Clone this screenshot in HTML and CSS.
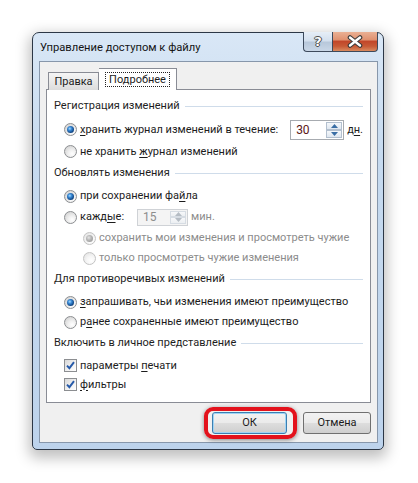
FILE: index.html
```html
<!DOCTYPE html>
<html lang="ru">
<head>
<meta charset="utf-8">
<title>Управление доступом к файлу</title>
<link rel="stylesheet" href="styles.css">
</head>
<body>
<div class="window">
  <div class="titlebar">
    <div class="title">Управление доступом к файлу</div>
    <div class="caption-btns">
      <div class="cbtn help">?</div>
      <div class="cbtn close">
        <svg width="18" height="13" viewBox="0 0 18 13">
          <path d="M4 2.5 L14 10.5 M14 2.5 L4 10.5" stroke="#3b3b3b" stroke-width="4.6" stroke-linecap="round" fill="none"/>
          <path d="M4 2.5 L14 10.5 M14 2.5 L4 10.5" stroke="#ffffff" stroke-width="2.4" stroke-linecap="round" fill="none"/>
        </svg>
      </div>
    </div>
  </div>
  <div class="client">
    <div class="tabs">
      <div class="tab">Правка</div>
      <div class="tab active"><span class="focus">Подробнее</span></div>
    </div>
    <div class="panel">
      <div class="group">
        <div class="hdr">Регистрация изменений</div>
        <div class="row h21">
          <span class="radio on"></span>
          <span class="lbl"><u>х</u>ранить журнал изменений в течение:</span>
          <div class="spin">
            <span class="val">30</span>
            <span class="arrows">
              <span class="arr up"><svg width="7" height="4" viewBox="0 0 7 4"><path d="M0 4 L3.5 0 L7 4 Z" fill="#3a6ea5"/></svg></span>
              <span class="arr dn"><svg width="7" height="4" viewBox="0 0 7 4"><path d="M0 0 L3.5 4 L7 0 Z" fill="#3a6ea5"/></svg></span>
            </span>
          </div>
          <span class="unit">д<u>н</u>.</span>
        </div>
        <div class="row h21 gap1">
          <span class="radio"></span>
          <span class="lbl">не хранить <u>ж</u>урнал изменений</span>
        </div>
      </div>
      <div class="group">
        <div class="hdr">Обновлять изменения</div>
        <div class="row h20">
          <span class="radio on"></span>
          <span class="lbl">при сохранении фа<u>й</u>ла</span>
        </div>
        <div class="row h22">
          <span class="radio"></span>
          <span class="lbl">кажд<u>ы</u>е:</span>
          <div class="spin disabled">
            <span class="val">15</span>
            <span class="arrows">
              <span class="arr up"><svg width="7" height="4" viewBox="0 0 7 4"><path d="M0 4 L3.5 0 L7 4 Z" fill="#b5bcc4"/></svg></span>
              <span class="arr dn"><svg width="7" height="4" viewBox="0 0 7 4"><path d="M0 0 L3.5 4 L7 0 Z" fill="#b5bcc4"/></svg></span>
            </span>
          </div>
          <span class="unit dim">мин.</span>
        </div>
        <div class="row h20 sub">
          <span class="radio on dis"></span>
          <span class="lbl dim">сохранить мои изменения и просмотреть чужие</span>
        </div>
        <div class="row h20 sub">
          <span class="radio dis"></span>
          <span class="lbl dim">только просмотреть чужие изменения</span>
        </div>
      </div>
      <div class="group">
        <div class="hdr">Для противоречивых изменений</div>
        <div class="row h20">
          <span class="radio on"></span>
          <span class="lbl"><u>з</u>апрашивать, чьи изменения имеют преимущество</span>
        </div>
        <div class="row h20">
          <span class="radio"></span>
          <span class="lbl">р<u>а</u>нее сохраненные имеют преимущество</span>
        </div>
      </div>
      <div class="group">
        <div class="hdr">Включить в личное представление</div>
        <div class="row h19">
          <span class="check"><svg width="9" height="9" viewBox="0 0 9 9"><path d="M1 4.6 L3.4 7.2 L8 1.2" stroke="#2559a8" stroke-width="1.9" fill="none"/></svg></span>
          <span class="lbl">параметры <u>п</u>ечати</span>
        </div>
        <div class="row h19">
          <span class="check"><svg width="9" height="9" viewBox="0 0 9 9"><path d="M1 4.6 L3.4 7.2 L8 1.2" stroke="#2559a8" stroke-width="1.9" fill="none"/></svg></span>
          <span class="lbl"><u>ф</u>ильтры</span>
        </div>
      </div>
    </div>
    <div class="buttons">
      <div class="btn-wrap">
        <button class="btn default">ОК</button>
        <span class="highlight"></span>
      </div>
      <button class="btn cancel">Отмена</button>
    </div>
  </div>
</div>
</body>
</html>
```

FILE: styles.css
```css
html, body {
  margin: 0;
  padding: 0;
  background: #ffffff;
}

body {
  font-family: Roboto, "Noto Sans", sans-serif;
  font-size: 11px;
  color: #1c1c1c;
  width: 418px;
  height: 483px;
  overflow: hidden;
}

.window {
  margin: 32px 0 0 32px;
  width: 352px;
  height: 418px;
  box-sizing: border-box;
  border: 1px solid #2c3746;
  border-radius: 7px 7px 5px 5px;
  background: linear-gradient(180deg, #d9e7f6 0%, #c6daef 30%, #bdd3ec 100%);
  box-shadow: 0 5px 14px 3px rgba(0, 0, 0, 0.25);
  padding: 0 5px 6px 6px;
  display: flex;
  flex-direction: column;
}

.titlebar {
  height: 28px;
  flex: none;
  display: flex;
  justify-content: space-between;
  align-items: flex-start;
}

.title {
  padding: 7px 0 0 1px;
  font-size: 11.2px;
  line-height: 16px;
  color: #151515;
}

.caption-btns {
  display: flex;
  margin-top: -1px;
}

.cbtn {
  height: 20px;
  box-sizing: border-box;
  border: 1px solid #3d4a5c;
  border-top: none;
  display: flex;
  align-items: center;
  justify-content: center;
}

.cbtn.help {
  width: 29px;
  border-right: none;
  border-radius: 0 0 0 4px;
  background: linear-gradient(180deg, #e6eef7 0%, #d4e0ee 45%, #b8c8db 55%, #c9d7e7 100%);
  color: #ffffff;
  font-family: "DejaVu Sans", sans-serif;
  font-weight: bold;
  font-size: 13px;
  text-shadow: 0 0 1px #333, 1px 0 0 #555, -1px 0 0 #555, 0 1px 0 #555, 0 -1px 0 #555;
}

.cbtn.close {
  width: 46px;
  border-radius: 0 0 4px 0;
  background: linear-gradient(180deg, #eab094 0%, #e09271 40%, #c2472a 50%, #c75a36 75%, #d98a5f 100%);
}

.client {
  flex: 1;
  box-sizing: border-box;
  border: 1px solid #8797ab;
  background: #f0f0f0;
  padding: 7px 6px 0 6px;
  display: flex;
  flex-direction: column;
}

.tabs {
  display: flex;
  align-items: flex-end;
  height: 21px;
  padding-left: 2px;
  margin-bottom: -1px;
  position: relative;
  z-index: 1;
}

.tab {
  box-sizing: border-box;
  height: 18px;
  width: 51px;
  border: 1px solid #898c95;
  border-bottom: none;
  background: linear-gradient(180deg, #f5f5f5 0%, #e9e9e9 50%, #dcdcdc 100%);
  display: flex;
  align-items: center;
  justify-content: center;
  line-height: 14px;
  color: #1c1c1c;
}

.tab.active {
  width: 78px;
  height: 22px;
  border-left: none;
  background: #ffffff;
  padding-bottom: 1px;
}

.focus {
  outline: 1px dotted #222;
  outline-offset: 0;
  padding: 0 3px;
  line-height: 13px;
}

.panel {
  box-sizing: border-box;
  height: 314px;
  border: 1px solid #898c95;
  background: #ffffff;
  padding: 8px 7px 0 7px;
}

.group + .group {
  margin-top: 3px;
}

.hdr {
  height: 16px;
  line-height: 16px;
  display: flex;
  align-items: center;
  margin-bottom: 5px;
  color: #1e1e1e;
}

.hdr::after {
  content: "";
  flex: 1;
  height: 1px;
  margin-left: 5px;
  background: #cfdcea;
}

.row {
  display: flex;
  align-items: center;
  padding-left: 10px;
}

.row.h19 { height: 19px; }
.row.h20 { height: 20px; }
.row.h21 { height: 21px; }
.row.h22 { height: 22px; }
.row.gap1 { margin-top: 1px; }
.row.sub { padding-left: 29px; }

.lbl {
  margin-left: 3px;
  white-space: nowrap;
  line-height: 16px;
}

u {
  text-decoration: underline;
  text-underline-offset: 2px;
}

.dim {
  color: #8c8c8c;
}

.radio {
  flex: none;
  width: 13px;
  height: 13px;
  box-sizing: border-box;
  border-radius: 50%;
  border: 1px solid #8c8e91;
  background: radial-gradient(circle at 65% 70%, #ffffff 0%, #f0f0f0 35%, #d6d6d6 80%);
  display: flex;
  align-items: center;
  justify-content: center;
}

.radio.on::after {
  content: "";
  width: 7px;
  height: 7px;
  border-radius: 50%;
  background: radial-gradient(circle at 40% 38%, #a8dcff 0%, #3a8ad6 30%, #124a8a 65%, #0b2c55 100%);
}

.radio.dis {
  border-color: #c3c3c3;
  background: radial-gradient(circle at 65% 70%, #ffffff 0%, #f6f6f6 40%, #e4e4e4 85%);
}

.radio.on.dis::after {
  background: radial-gradient(circle at 40% 38%, #e6e6e6 0%, #b7b7b7 40%, #8f8f8f 100%);
}

.check {
  flex: none;
  width: 13px;
  height: 13px;
  box-sizing: border-box;
  border: 1px solid #8c8e91;
  background: linear-gradient(135deg, #d8d8d8 0%, #f2f2f2 60%, #ffffff 100%);
  display: flex;
  align-items: center;
  justify-content: center;
}

.check svg {
  display: block;
}

.spin {
  flex: none;
  margin-left: 12px;
  width: 54px;
  height: 20px;
  box-sizing: border-box;
  border: 1px solid #a7abb0;
  background: #ffffff;
  display: flex;
  align-items: stretch;
}

.spin .val {
  flex: 1;
  padding-left: 5px;
  line-height: 18px;
  font-size: 12px;
  color: #5a1616;
}

.spin .arrows {
  width: 16px;
  display: flex;
  flex-direction: column;
  padding: 1px 1px 1px 0;
}

.spin .arr {
  flex: 1;
  box-sizing: border-box;
  border: 1px solid #b3c0cf;
  background: linear-gradient(180deg, #f5f8fb 0%, #dfe7f0 100%);
  display: flex;
  align-items: center;
  justify-content: center;
}

.spin .arr svg {
  display: block;
}

.spin.disabled {
  margin-left: 13px;
  width: 51px;
  height: 17px;
  border-color: #cfd2d6;
  background: #f4f4f4;
}

.spin.disabled .val {
  color: #8c8c8c;
  line-height: 15px;
}

.spin.disabled .arr {
  border-color: #d6dce3;
  background: linear-gradient(180deg, #f7f8fa 0%, #eceff2 100%);
}

.unit {
  margin-left: 3px;
  line-height: 16px;
}

.buttons {
  margin-top: 9px;
  display: flex;
  justify-content: flex-end;
  gap: 16px;
}

.btn-wrap {
  position: relative;
  display: flex;
}

.btn {
  font-family: Roboto, "Noto Sans", sans-serif;
  font-size: 11px;
  color: #1c1c1c;
  height: 22px;
  padding: 0;
  box-sizing: border-box;
  border-radius: 3px;
  border: 1px solid #707070;
  background: linear-gradient(180deg, #f2f2f2 0%, #ebebeb 48%, #dddddd 52%, #cfcfcf 100%);
  line-height: 18px;
}

.btn.default {
  width: 75px;
  border-color: #3c7fb1;
  box-shadow: inset 0 0 0 1px #9fd4f5;
}

.btn.cancel {
  width: 68px;
}

.highlight {
  position: absolute;
  left: -8px;
  top: -5px;
  width: 93px;
  height: 32px;
  box-sizing: border-box;
  border: 4px solid #e3121c;
  border-radius: 9px;
  box-shadow: 0 1px 4px rgba(0, 0, 0, 0.45);
  pointer-events: none;
}
```
